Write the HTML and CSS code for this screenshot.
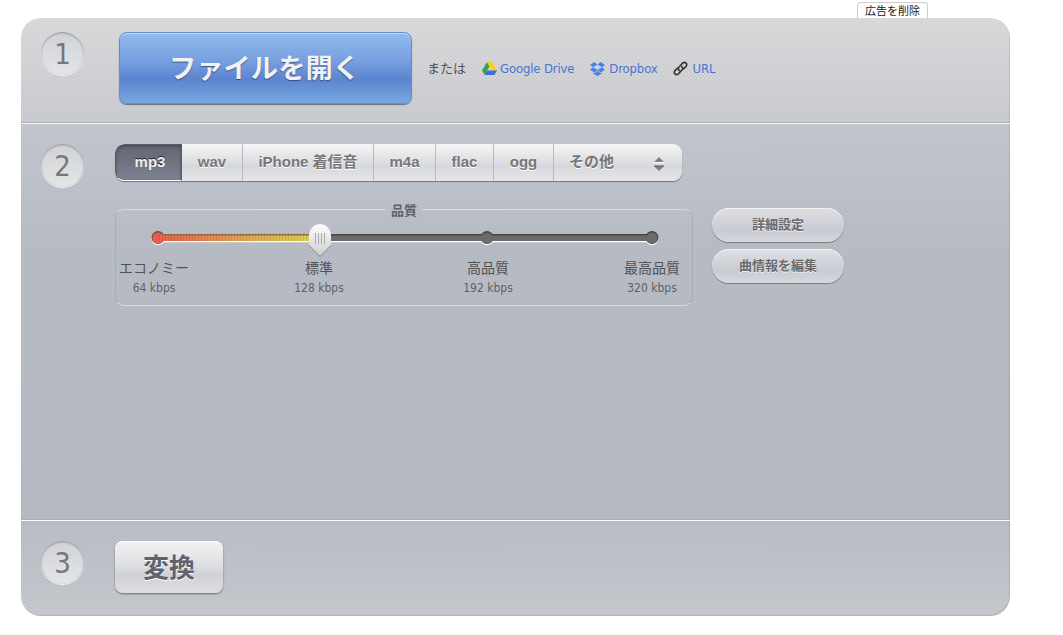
FILE: index.html
```html
<!DOCTYPE html>
<html lang="ja">
<head>
    <meta charset="UTF-8">
    <meta name="viewport" content="width=device-width, initial-scale=1.0">
    <title>Audio Converter</title>
    <link rel="stylesheet" href="styles.css">
</head>
<body>
    <div class="top-bar">
        <a class="remove-ads">広告を削除</a>
    </div>

    <main class="converter">
        <section class="step step-open">
            <div class="number">1</div>
            <button class="open-button">ファイルを開く</button>
            <div class="sources">
                <span class="or">または</span>
                <a class="source drive">
                    <svg width="15" height="13" viewBox="0 0 15 13">
                        <path d="M5 0 0 8.6 2.6 13 7.5 4.4z" fill="#3f9d4b"/>
                        <path d="M5 0h5l5 8.6H10z" fill="#f7d016"/>
                        <path d="M5.1 8.6H15L12.5 13H2.6z" fill="#3f6fd8"/>
                    </svg>
                    <span>Google Drive</span>
                </a>
                <a class="source dropbox">
                    <svg width="15" height="14" viewBox="0 0 15 14">
                        <g fill="#4584e5">
                            <path d="M4.4 0 0 2.9l3.1 2.4 4.4-2.7z"/>
                            <path d="M10.6 0 7.5 2.6l4.4 2.7L15 2.9z"/>
                            <path d="M3.1 5.3 0 7.8l4.4 2.8 3.1-2.6z"/>
                            <path d="M11.9 5.3 15 7.8l-4.4 2.8L7.5 8z"/>
                            <path d="M7.5 8.8 4.4 11.3 3 10.4v1.1L7.5 14l4.5-2.5v-1.1l-1.4.9z"/>
                        </g>
                    </svg>
                    <span>Dropbox</span>
                </a>
                <a class="source url">
                    <svg width="15" height="15" viewBox="0 0 15 15">
                        <g fill="none" stroke="#333" stroke-width="1.6" stroke-linecap="round">
                            <path d="M6.2 9.4C5 8.2 5.1 6.9 6 6l3.6-3.900c2.500-2 5.400.8 3.400 3.300L10.700 7.800"/>
                            <path d="M8.800 5.600c1.200 1.200 1.100 2.500.2 3.400l-3.600 3.900C2.900 14.900 0 12.100 2 9.600L4.300 7.200"/>
                        </g>
                    </svg>
                    <span>URL</span>
                </a>
            </div>
        </section>

        <section class="step step-format">
            <div class="number">2</div>
            <div class="settings">
                <div class="formats">
                    <button class="format format-mp3 active">mp3</button>
                    <button class="format format-wav">wav</button>
                    <button class="format format-iphone">iPhone 着信音</button>
                    <button class="format format-m4a">m4a</button>
                    <button class="format format-flac">flac</button>
                    <button class="format format-ogg">ogg</button>
                    <button class="format format-other">
                        その他
                        <svg width="10" height="14" viewBox="0 0 10 14">
                            <path d="M0 5 5 0l5 5zM0 9h10l-5 5z" fill="#808080"/>
                            <path d="M0 9h10" stroke="#555"/>
                            <path d="M0 5.500h10" stroke="#fff"/>
                        </svg>
                    </button>
                </div>
                <div class="options">
                    <fieldset class="quality">
                        <legend>品質</legend>
                        <svg class="slider" width="512" height="38" viewBox="0 0 512 38">
                            <defs>
                                <linearGradient id="fill">
                                    <stop offset="0" stop-color="#e9614e"/>
                                    <stop offset=".5" stop-color="#e2a253"/>
                                    <stop offset="1" stop-color="#d7d84e"/>
                                </linearGradient>
                                <linearGradient id="handle" x2="0" y2="1">
                                    <stop offset="0" stop-color="#fff"/>
                                    <stop offset="1" stop-color="#cecece"/>
                                </linearGradient>
                                <pattern id="ridges" width="3" height="8" patternUnits="userSpaceOnUse">
                                    <path d="M.5 0v8" stroke="#000" stroke-opacity=".1"/>
                                </pattern>
                            </defs>
                            <g fill="#fff" transform="translate(0 1.200)">
                                <path d="M8 12h494v7H8z"/>
                                <circle cx="8" cy="15.500" r="6.500"/>
                                <circle cx="337" cy="15.500" r="6.500"/>
                                <circle cx="502" cy="15.500" r="6.500"/>
                            </g>
                            <g fill="#464648">
                                <path d="M8 12h494v7H8z"/>
                                <circle cx="8" cy="15.500" r="6.500" fill="#873f38"/>
                                <circle cx="337" cy="15.500" r="6.500"/>
                                <circle cx="502" cy="15.500" r="6.500"/>
                            </g>
                            <g fill="#6b6b6b">
                                <path d="M170 13.500h332V19H170z"/>
                                <circle cx="337" cy="16" r="5.500"/>
                                <circle cx="502" cy="16" r="5.500"/>
                            </g>
                            <path d="M8 12h162v7H8z" fill="#996e43"/>
                            <circle cx="8" cy="16" r="5.500" fill="#e9614e"/>
                            <path d="M8 13.500h162V19H8z" fill="url(#fill)"/>
                            <path d="M4 12h166v7H4z" fill="url(#ridges)"/>
                            <path d="M159 13a11 11 0 0 1 22 0v11l-11 11-11-11z" fill="#555" opacity=".5"/>
                            <path d="M159 13a11 11 0 0 1 22 0v10l-11 11-11-11z" fill="url(#handle)"/>
                            <path d="M165.500 11v11m3-11v11m3-11v11m3-11v11" stroke="#aaa"/>
                        </svg>
                        <div class="levels">
                            <div class="level economy"><b>エコノミー</b><span>64 kbps</span></div>
                            <div class="level standard"><b>標準</b><span>128 kbps</span></div>
                            <div class="level good"><b>高品質</b><span>192 kbps</span></div>
                            <div class="level best"><b>最高品質</b><span>320 kbps</span></div>
                        </div>
                    </fieldset>
                    <div class="extra">
                        <button class="pill">詳細設定</button>
                        <button class="pill">曲情報を編集</button>
                    </div>
                </div>
            </div>
        </section>

        <section class="step step-convert">
            <div class="number">3</div>
            <button class="convert-button">変換</button>
        </section>
    </main>
</body>
</html>
```
FILE: styles.css
```css
* {
    box-sizing: border-box;
}
body {
    margin: 0;
    background: #fff;
    color: #505256;
    font-family: "DejaVu Sans Condensed", "Noto Sans CJK JP", sans-serif;
    font-size: 13px;
    overflow: hidden;
}
button {
    margin: 0;
    padding: 0;
    border: none;
    font-family: "Liberation Sans", "Noto Sans CJK JP", sans-serif;
    font-weight: bold;
    cursor: pointer;
}
.top-bar {
    display: flex;
    justify-content: flex-end;
    height: 18px;
    padding: 2px 135px 0 0;
}
.remove-ads {
    width: 71px;
    border: 1px solid #ccc;
    border-bottom: none;
    border-radius: 4px 4px 0 0;
    color: #222;
    font-size: 11px;
    line-height: 17px;
    text-align: center;
}
.converter {
    width: 989px;
    height: 598px;
    margin-left: 21px;
    border-radius: 20px;
    overflow: hidden;
    box-shadow: inset -1px -1px 1px rgba(0, 0, 0, 0.1);
    background:
        radial-gradient(circle, rgba(70, 75, 90, 0.05) 0.8px, transparent 1.2px) 0 0 / 4px 4px,
        radial-gradient(circle, rgba(70, 75, 90, 0.05) 0.8px, transparent 1.2px) 2px 2px / 4px 4px,
        linear-gradient(#dcdcdd 0, #cdced2 104px, #c5c8d0 106px, #b9bec6 230px, #b8bcc5 500px, #bcc0c7 510px, #c7cace 598px);
}
.step {
    display: flex;
    align-items: flex-start;
    padding-left: 20px;
}
.step-open {
    height: 105px;
    padding-top: 14px;
    border-bottom: 1px solid #aaabb2;
}
.step-format {
    height: 397px;
    padding-top: 20px;
    border-top: 1px solid #fafafa;
    border-bottom: 1px solid #a8abb3;
}
.step-convert {
    height: 96px;
    padding-top: 20px;
    border-top: 1px solid #fafafa;
}
.number {
    flex: none;
    width: 43px;
    height: 43px;
    border-radius: 50%;
    background: linear-gradient(#d0d2d8, #e4e5e7);
    box-shadow: inset 0 1px 2px rgba(0, 0, 0, 0.3), 0 1px 0 #f5f5f5;
    color: #777;
    font-size: 29px;
    line-height: 45px;
    text-align: center;
}
.open-button {
    width: 293px;
    height: 72px;
    margin-left: 35px;
    padding: 0 2px 4px 0;
    border: 1px solid #5d8fcc;
    border-radius: 8px;
    background: linear-gradient(#91bbec, #779fe0 40%, #5c84d0 66%, #79a8e0);
    box-shadow: inset 0 1px 0 #c3ddf6, 0 1px 1px rgba(30, 50, 90, 0.6);
    color: #f1f1f1;
    font-size: 27.3px;
    text-shadow: 0 1px 1px rgba(20, 40, 80, 0.6);
}
.sources {
    display: flex;
    align-items: center;
    height: 18px;
    margin: 27px 0 0 15px;
}
.or {
    margin-top: -2px;
}
.source {
    display: flex;
    align-items: center;
    gap: 3px;
    color: #4a74d0;
    letter-spacing: -0.15px;
}
.source svg {
    margin-top: 1px;
}
.drive {
    margin-left: 16px;
}
.dropbox {
    gap: 4px;
    margin-left: 16px;
}
.url {
    gap: 5px;
    margin-left: 15px;
}
.settings {
    margin-left: 31px;
}
.formats {
    display: flex;
    width: 567px;
    height: 37px;
    border-radius: 9px;
    overflow: hidden;
    background: linear-gradient(#f5f5f6, #dddee2 50%, #d7d8dd 60%, #e6e6e9);
    box-shadow: 0 1px 1px #73757b;
}
.format {
    flex: none;
    padding-bottom: 2px;
    border-right: 1px solid #b9babf;
    background: none;
    color: #777;
    font-size: 15px;
    line-height: 33px;
    text-shadow: 0 1px 0 #fff;
}
.format-mp3 {
    width: 67px;
    padding-left: 3px;
}
.format-wav {
    width: 61px;
}
.format-iphone {
    width: 131px;
}
.format-m4a {
    width: 62px;
}
.format-flac {
    width: 58px;
}
.format-ogg {
    width: 60px;
}
.format-other {
    display: flex;
    align-items: center;
    justify-content: space-between;
    width: 128px;
    padding: 0 18px 2px 15px;
    border: none;
}
.format-other svg {
    margin-top: 4px;
}
.format.active {
    border: 1px solid #5b5e6a;
    border-bottom-color: #fff;
    border-radius: 9px 0 0 9px;
    background: linear-gradient(#626571, #7c8294);
    box-shadow: inset 0 1px 3px rgba(0, 0, 0, 0.35);
    color: #f0f0f0;
    text-shadow: 0 -1px 0 #222;
}
.options {
    display: flex;
    gap: 19px;
    padding-top: 20px;
}
.quality {
    width: 578px;
    height: 105px;
    margin: 0;
    padding: 0;
    border: 1px solid #d7dade;
    border-left-color: #a9adb4;
    border-right-color: #a9adb4;
    border-radius: 9px;
}
.quality legend {
    height: 16px;
    margin: 0 auto;
    padding: 0 5px;
    color: #606267;
    font-size: 13px;
    font-weight: bold;
    line-height: 20px;
}
.slider {
    display: block;
    margin: 5px 0 0 34px;
}
.levels {
    display: flex;
    margin: -2px -4px 0;
}
.level {
    display: flex;
    flex-direction: column;
    align-items: center;
    width: 84px;
    font-size: 12px;
}
.level b {
    font-size: 14px;
    font-weight: normal;
    line-height: 20px;
}
.level span {
    margin-top: 1px;
    color: #606267;
    line-height: 18px;
}
.standard {
    margin-left: 81px;
}
.good {
    margin-left: 85px;
}
.best {
    margin-left: 80px;
}
.extra {
    display: flex;
    flex-direction: column;
    gap: 7px;
    padding-top: 7px;
}
.pill {
    width: 132px;
    height: 34px;
    padding-bottom: 4px;
    border-radius: 17px;
    background: linear-gradient(#dfe0e3, #c9cbd2 65%, #d7d8dc);
    box-shadow: inset 0 1px 0 #f2f2f3, 0 1px 1px #777a80;
    color: #6b6b6d;
    font-size: 13px;
    text-shadow: 0 1px 0 #eee;
}
.convert-button {
    width: 108px;
    height: 52px;
    margin-left: 31px;
    padding-bottom: 3px;
    border-radius: 8px;
    background: linear-gradient(#f3f3f4, #dcdde0 50%, #d0d1d6 65%, #dedee2);
    box-shadow: inset 0 1px 0 #fff, 0 1px 2px #696b70;
    color: #5f636d;
    font-size: 26px;
    text-shadow: 0 1px 0 #fff;
}
```
